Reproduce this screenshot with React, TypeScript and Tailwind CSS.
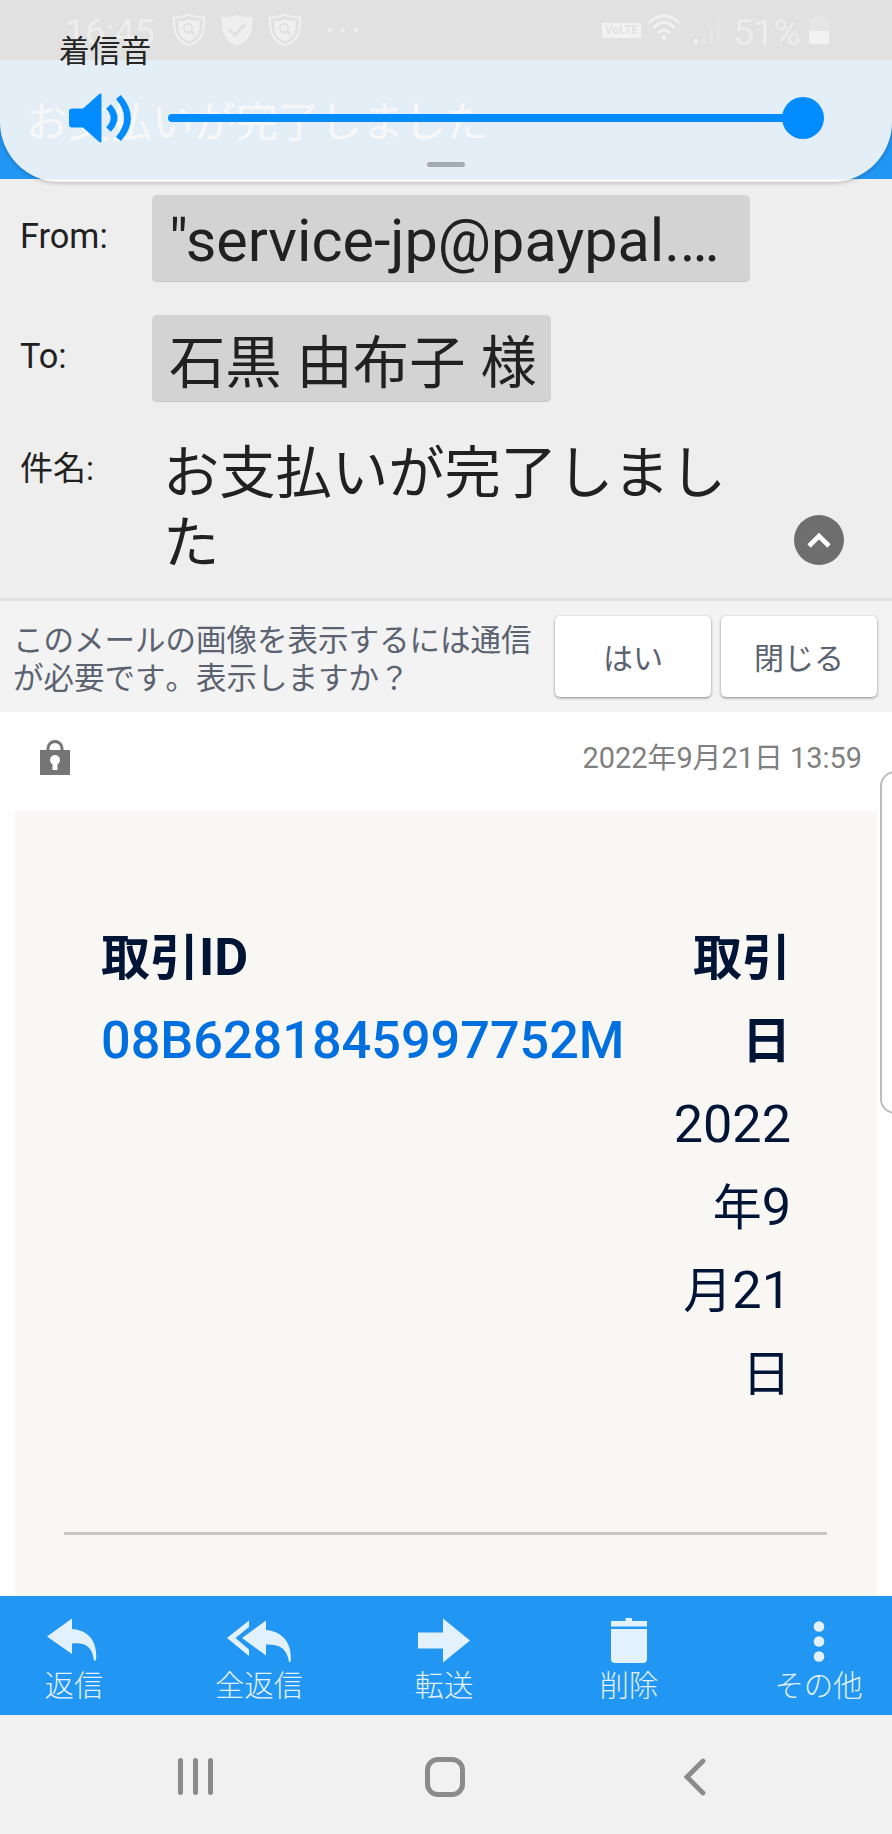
import React from 'react';

const ShieldSearch: React.FC = () => (
  <svg viewBox="0 0 34 34" className="w-[34px] h-[34px]" fill="none">
    <path d="M17 1.500C12 4 7 4.500 1.800 4.500C1.500 17 3 27.500 17 32.500C31 27.500 32.500 17 32.200 4.500C27 4.500 22 4 17 1.500Z" stroke="currentColor" strokeWidth="2.200" />
    <path d="M17 6C13.500 7.500 10 8 6 8C6 18 7.500 25 17 28.500C26.500 25 28 18 28 8C24 8 20.500 7.500 17 6Z" fill="currentColor" />
    <circle cx="16" cy="15" r="4.200" stroke="#000" strokeWidth="2" />
    <path d="M19 18L23 22" stroke="#000" strokeWidth="2.500" />
  </svg>
);

const ShieldCheck: React.FC = () => (
  <svg viewBox="0 0 34 34" className="w-[34px] h-[34px]" fill="none">
    <path d="M17 2C12 4 7 4 1.500 4C1 18 4 28 17 33C30 28 33 18 32.500 4C27 4 22 4 17 2Z" fill="currentColor" />
    <path d="M9.500 17L15 22L25 11.500" stroke="#000" strokeWidth="3" />
  </svg>
);

const StatusBar: React.FC = () => (
  <div className="h-[60px] shrink-0 bg-black text-[#8a8a8a] flex items-center pl-[65px] pr-[63px]">
    <span className="text-[36px] leading-[36px] pt-[5px] w-[107px]">16:45</span>
    <div className="flex gap-[14px] text-[#a0a0a0]">
      <ShieldSearch />
      <ShieldCheck />
      <ShieldSearch />
    </div>
    <div className="flex gap-[9px] ml-[26px] text-[#a0a0a0]">
      <span className="w-1 h-1 rounded-full bg-current" />
      <span className="w-1 h-1 rounded-full bg-current" />
      <span className="w-1 h-1 rounded-full bg-current" />
    </div>
    <div className="flex items-center ml-auto">
      <span className="flex w-[39px] h-[15px] bg-[#c4c4c4] text-black text-[12px] leading-[15px] font-bold justify-center">VoLTE</span>
      <svg viewBox="0 0 76 32" className="w-[76px] h-[32px] ml-[6px]" fill="none" stroke="currentColor">
        <path d="M2 9C11-0.500 23-0.500 32 9" strokeWidth="2.800" stroke="#b8b8b8" />
        <path d="M6.500 14C13 7 21 7 27.500 14" strokeWidth="2.800" stroke="#b8b8b8" />
        <path d="M11 19C15 15 19 15 23 19" strokeWidth="2.800" stroke="#b8b8b8" />
        <circle cx="17" cy="23.500" r="2.300" fill="#b8b8b8" stroke="none" />
        <path d="M49 25V30" strokeWidth="3.500" stroke="#a0a0a0" />
        <path d="M57 19V30M64 13V30M71 6V30" strokeWidth="3" stroke="#3c3c3c" />
      </svg>
      <span className="text-[37px] leading-[36px] pt-[5px] ml-[10px] tracking-[-0.600px] w-[76px]">51%</span>
      <svg viewBox="0 0 20 28" className="w-[20px] h-[28px]">
        <path d="M5.500 0H14.500V3H20V15H0V3H5.500Z" fill="#3c3c3c" />
        <path d="M0 15H20V26Q20 28 18 28H2Q0 28 0 26Z" fill="#c4c4c4" />
      </svg>
    </div>
  </div>
);

// Translucent volume panel that slides over the status bar and the app title
const VolumePanel: React.FC = () => (
  <div className="absolute inset-x-0 top-0 h-[182px] rounded-b-[60px] bg-[rgba(246,246,246,0.914)] shadow-[0_1px_4px_rgba(0,0,0,0.25)] pt-[32px]">
    <div className="pl-[59px] text-[30.7px] leading-[40px] text-[#252525]">着信音</div>
    <div className="mt-[1px] h-[89px] flex items-center pl-[69px] pr-[89px]">
      <svg viewBox="0 0 62 50" className="w-[62px] h-[50px]" fill="none">
        <path d="M3 15.500H14L30 1.200Q32.500-0.500 32.500 2V48Q32.500 50.500 30 48.800L14 34.500H3Q0 34.500 0 31.500V18.500Q0 15.500 3 15.500Z" fill="#038cff" />
        <path d="M39.500 13.500Q50.500 25 39.500 36.500" stroke="#038cff" strokeWidth="6.500" />
        <path d="M49.500 4Q67.500 25 49.500 46" stroke="#038cff" strokeWidth="6.500" />
      </svg>
      <div className="relative flex-1 ml-[37px] h-[8px] rounded-full bg-[#038cff]">
        <span className="absolute -right-[21px] -top-[17px] w-[42px] h-[42px] rounded-full bg-[#038cff]" />
      </div>
    </div>
    <div className="mx-auto w-[38px] h-[5px] rounded-full bg-[#a5abb0]" />
  </div>
);

const MailHeader: React.FC = () => (
  <div className="h-[422px] shrink-0 bg-[#eee] border-b-[3px] border-[#e0e0e0] text-[#212121] pt-[16px]">
    <div className="flex h-[87px]">
      <span className="w-[152px] pl-[20px] pt-[21px] text-[34.3px] leading-[40px]">From:</span>
      <div className="w-[598px] rounded-[5px] bg-[#d3d3d3] border-b border-[#c4c4c4] pl-[17px] pt-[6px] text-[59.3px] leading-[80px] whitespace-nowrap">
        "service-jp@paypal.…
      </div>
    </div>
    <div className="flex h-[87px] mt-[33px]">
      <span className="w-[152px] pl-[20px] pt-[21px] text-[34.3px] leading-[40px]">To:</span>
      <div className="w-[399px] rounded-[5px] bg-[#d3d3d3] border-b border-[#c4c4c4] pl-[17px] pt-[9px] text-[56.3px] leading-[80px] [word-spacing:1px] whitespace-nowrap">
        石黒 由布子 様
      </div>
    </div>
    <div className="flex mt-[37px]">
      <span className="w-[163px] pl-[20px] pt-[10px] text-[33px] leading-[40px]">件名:</span>
      <p className="w-[600px] text-[56.3px] leading-[70px]">お支払いが完了しました</p>
      <span className="w-[50px] h-[50px] mt-[76px] ml-[31px] rounded-full bg-[#6e6e6e] flex items-center justify-center">
        <svg viewBox="0 0 24 16" className="w-[24px] h-[16px]" fill="none">
          <path d="M2 14L12 4L22 14" stroke="#fff" strokeWidth="4.600" />
        </svg>
      </span>
    </div>
  </div>
);

const ImageNotice: React.FC = () => (
  <div className="h-[111px] shrink-0 bg-[#f3f3f3] flex text-[#5b6270]">
    <p className="w-[542px] pl-[13px] pt-[21px] text-[30.5px] leading-[37.7px] shrink-0 [font-kerning:none]">
      このメールの画像を表示するには通信<br />が必要です。表示しますか？
    </p>
    <div className="flex gap-[10px] ml-[13px] mt-[15px] shrink-0">
      {['はい', '閉じる'].map((label) => (
        <button key={label} className="w-[156px] h-[81px] rounded-[5px] bg-white shadow-[0_1px_3px_rgba(0,0,0,0.45)] text-[30px] leading-[40px] pt-[5px]">
          {label}
        </button>
      ))}
    </div>
  </div>
);

const DateRow: React.FC = () => (
  <div className="h-[99px] shrink-0 bg-white flex items-center justify-between pl-[40px] pr-[30px] pb-[7px]">
    <svg viewBox="0 0 30 35" className="w-[30px] h-[35px] mb-[2px]">
      <path d="M8 11V8.500A7 7 0 0 1 22 8.500V11" fill="none" stroke="#757575" strokeWidth="3" />
      <path d="M0 10H30V35H0Z" fill="#757575" />
      <circle cx="15" cy="20" r="5" fill="#fff" />
      <path d="M12.500 22H17.500V30H12.500Z" fill="#fff" />
    </svg>
    <span className="text-[28.9px] leading-[40px] text-[#808080]">2022年9月21日 13:59</span>
  </div>
);

const MailBody: React.FC = () => (
  <div className="h-[785px] shrink-0 bg-white px-[15px]">
    <div className="h-full bg-[#f9f7f4] pt-[105px]">
      <div className="flex justify-between pl-[86px] pr-[86px] text-[52.2px] leading-[83.3px] text-[#001435]">
        <div>
          <p className="font-bold"><span className="text-[49px] leading-none">取引</span>ID</p>
          <p className="font-medium text-[#0070e0]">08B6281845997752M</p>
        </div>
        <div className="text-right">
          <p className="font-bold"><span className="text-[49px] leading-none">取引<br />日</span></p>
          <p>2022</p>
          <p><span className="text-[49px] leading-none">年</span>9</p>
          <p><span className="text-[49px] leading-none">月</span>21</p>
          <p><span className="text-[49px] leading-none">日</span></p>
        </div>
      </div>
      <div className="mt-[116px] ml-[49px] mr-[50px] h-[3px] bg-[#c6c5c3]" />
    </div>
  </div>
);

const actions = [
  {
    label: '返信',
    icon: (
      <svg viewBox="0 0 50 46" className="w-[50px] h-[46px] mr-[4px]" fill="currentColor">
        <path d="M0 19.500L25 1.500V12C41 13 51 24 49 43.500H47C45 29 38 25.500 25 26.500V37Z" />
      </svg>
    ),
  },
  {
    label: '全返信',
    icon: (
      <svg viewBox="0 0 64 46" className="w-[64px] h-[46px]" fill="currentColor">
        <path d="M0 21L22 3.500V10L8.500 21L22 32.500V39Z" />
        <path d="M15 21L39 3.500V13C54 14 66 25 63.500 45H62C60 31 52 27 39 27.500V38.500Z" />
      </svg>
    ),
  },
  {
    label: '転送',
    icon: (
      <svg viewBox="0 0 52 46" className="w-[52px] h-[46px]" fill="currentColor">
        <path d="M0 15.500H25V1.500L52 23.500L25 45.500V31.500H0Z" />
      </svg>
    ),
  },
  {
    label: '削除',
    icon: (
      <svg viewBox="0 0 36 46" className="w-[36px] h-[46px]" fill="currentColor">
        <path d="M0 4H14.500V1H21V4H36V9.500H0Z" />
        <path d="M0 12H36V42Q36 46 32 46H4Q0 46 0 42Z" />
      </svg>
    ),
  },
  {
    label: 'その他',
    icon: (
      <svg viewBox="0 0 12 46" className="w-[12px] h-[46px]" fill="currentColor">
        <circle cx="6" cy="9.500" r="5.300" />
        <circle cx="6" cy="24.500" r="5.300" />
        <circle cx="6" cy="39.500" r="5.300" />
      </svg>
    ),
  },
];

const ActionBar: React.FC = () => (
  <div className="h-[119px] shrink-0 bg-[#2196f3] text-[#e3f1fd] grid grid-cols-[148px_222px_148px_222px_157px] overflow-hidden pt-[21px]">
    {actions.map((action) => (
      <div key={action.label} className="flex flex-col items-center">
        {action.icon}
        <span className="text-[29.4px] leading-[40px] mt-[3px] font-light">{action.label}</span>
      </div>
    ))}
  </div>
);

const NavBar: React.FC = () => (
  <div className="h-[119px] shrink-0 bg-[#f1f1f1] flex items-center pl-[178px]">
    <div className="flex gap-[10px] mt-[4px]">
      <span className="w-[5px] h-[37px] rounded-full bg-[#8b8b8b]" />
      <span className="w-[5px] h-[37px] rounded-full bg-[#8b8b8b]" />
      <span className="w-[5px] h-[37px] rounded-full bg-[#8b8b8b]" />
    </div>
    <span className="w-[40px] h-[40px] ml-[212px] mt-[4px] rounded-[13px] border-[5px] border-[#8b8b8b]" />
    <svg viewBox="0 0 22 38" className="w-[22px] h-[38px] ml-[219px] mt-[4px]" fill="none">
      <path d="M19 3L3 19L19 35" stroke="#8b8b8b" strokeWidth="4.800" strokeLinecap="round" />
    </svg>
  </div>
);

const App: React.FC = () => {
  return (
    <div className="relative w-[892px] h-[1834px] overflow-hidden flex flex-col font-['Roboto','Noto_Sans_CJK_JP',sans-serif]">
      <StatusBar />
      <div className="h-[119px] shrink-0 bg-[#2196f3] text-white pl-[26px] pt-[38px] text-[42px] leading-[50px]">
        お支払いが完了しました
      </div>
      <MailHeader />
      <ImageNotice />
      <DateRow />
      <MailBody />
      <ActionBar />
      <NavBar />
      <VolumePanel />
      {/* edge panel handle */}
      <span className="absolute left-[880px] top-[771px] w-[30px] h-[343px] rounded-[16px] border-2 border-[#bdbdbd] bg-white" />
    </div>
  );
};

export default App;
